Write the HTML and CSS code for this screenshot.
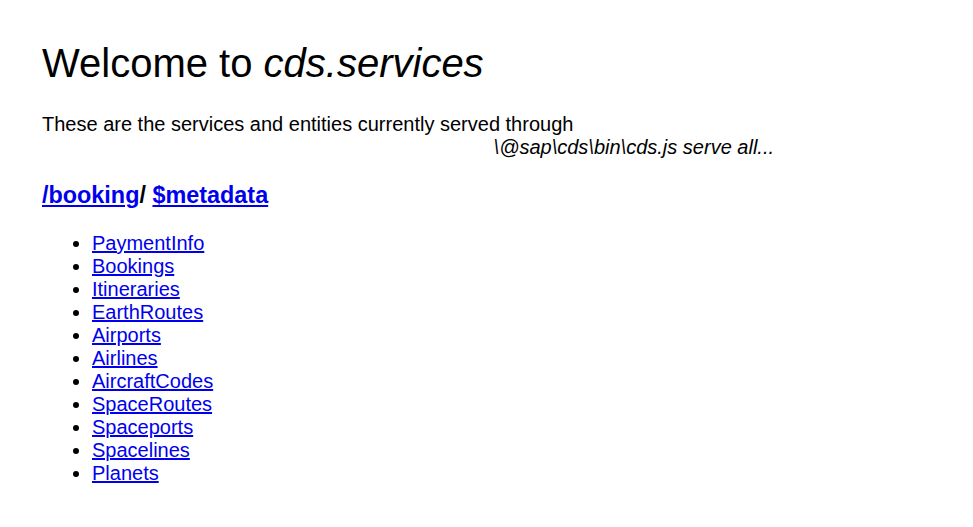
FILE: index.html
```html
<!DOCTYPE html>
<html>
<head>
<meta charset="utf-8">
<title>Welcome to cds.services</title>
<link rel="stylesheet" href="styles.css">
</head>
<body>
<h1 class="title">Welcome to <i>cds.services</i></h1>
<div class="intro">
  <div>These are the services and entities currently served through</div>
  <div class="cmd"><i>\@sap\cds\bin\cds.js serve all...</i></div>
</div>
<h3 class="service"><a href="#">/booking</a>/ <a href="#">$metadata</a></h3>
<ul class="entities">
  <li><a href="#">PaymentInfo</a></li>
  <li><a href="#">Bookings</a></li>
  <li><a href="#">Itineraries</a></li>
  <li><a href="#">EarthRoutes</a></li>
  <li><a href="#">Airports</a></li>
  <li><a href="#">Airlines</a></li>
  <li><a href="#">AircraftCodes</a></li>
  <li><a href="#">SpaceRoutes</a></li>
  <li><a href="#">Spaceports</a></li>
  <li><a href="#">Spacelines</a></li>
  <li><a href="#">Planets</a></li>
</ul>
</body>
</html>
```
FILE: styles.css
```css
html, body {
  background: #fff;
}
body {
  margin: 0;
  padding: 40px 42px 0;
  font-family: "Liberation Sans", Arial, sans-serif;
  font-size: 20px;
  color: #000;
}
.title {
  font-size: 40px;
  font-weight: normal;
  margin: 0 0 27px;
  line-height: 46px;
}
.intro {
  width: 732px;
  line-height: 23px;
  margin: 0;
}
.cmd {
  text-align: right;
}
.service {
  font-size: 23.4px;
  line-height: 27px;
  font-weight: bold;
  margin: 23px 0 23px;
}
a {
  color: #0000ee;
  text-decoration: underline;
}
.entities {
  margin: 0;
  padding-left: 50px;
  line-height: 23px;
}
```
